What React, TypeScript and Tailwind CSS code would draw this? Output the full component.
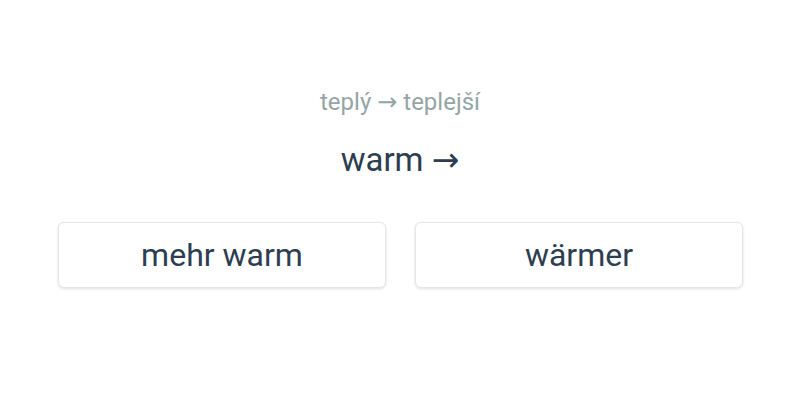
function Arrow() {
  return <span style={{ fontFamily: '"DejaVu Sans", sans-serif' }}>→</span>;
}

export default function App() {
  return (
    <div className="w-[800px] h-[400px] bg-white" style={{ fontFamily: "Roboto, sans-serif" }}>
      <div className="pt-[86px] flex flex-col items-center">
        <div className="text-[24px] leading-[32px] text-[#95a5a6]">teplý <Arrow /> teplejší</div>
        <div className="mt-[22px] text-[33px] leading-[40px] text-[#2c3e50]">warm <Arrow /></div>
        <div className="mt-[42px] ml-[1px] w-[685px] grid grid-cols-2 gap-[29px]">
          <button className="h-[66px] rounded-[6px] bg-white border border-[#e3e6e8] shadow-[0_1px_3px_rgba(0,0,0,0.12)] text-[32px] text-[#2c3e50]">mehr warm</button>
          <button className="h-[66px] rounded-[6px] bg-white border border-[#e3e6e8] shadow-[0_1px_3px_rgba(0,0,0,0.12)] text-[32px] text-[#2c3e50]">wärmer</button>
        </div>
      </div>
    </div>
  );
}
